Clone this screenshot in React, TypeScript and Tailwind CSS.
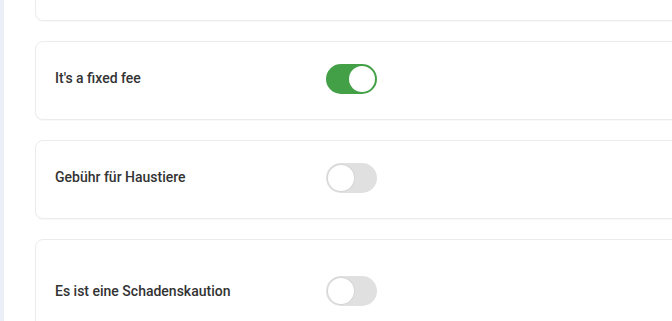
import { useState } from "react";

type Row = { id: string; label: string; on: boolean; tall?: boolean };

const ROWS: Row[] = [
  { id: "fixed", label: "It's a fixed fee", on: true },
  { id: "pets", label: "Gebühr für Haustiere", on: false },
  { id: "deposit", label: "Es ist eine Schadenskaution", on: false, tall: true },
];

function Toggle({ on, onChange }: { on: boolean; onChange: () => void }) {
  return (
    <button
      type="button"
      onClick={onChange}
      className={`relative w-[51px] h-[30px] rounded-full flex items-center px-[2px] ${
        on ? "bg-[#43a047] justify-end" : "bg-[#e0e0e0] justify-start"
      }`}
    >
      <span
        className={`block w-[26px] h-[26px] rounded-full bg-white ${
          on ? "" : "shadow-[0_0_0_1px_#d6d6d6]"
        }`}
      />
    </button>
  );
}

export default function App() {
  const [rows, setRows] = useState(ROWS);

  const flip = (id: string) =>
    setRows((r) => r.map((x) => (x.id === id ? { ...x, on: !x.on } : x)));

  return (
    <div
      className="h-[321px] w-[672px] overflow-hidden bg-white flex"
      style={{ fontFamily: "Roboto, 'Liberation Sans', sans-serif" }}
    >
      {/* Left rail */}
      <div className="w-[4px] shrink-0 bg-[#e9eef7]" />

      <div className="flex flex-col gap-[20px] pl-[31px] -mt-[59px]">
        {/* Previous card, mostly scrolled out */}
        <div className="w-[660px] h-[80px] shrink-0 rounded-[8px] border border-[#ececec] bg-white shadow-[0_1px_1px_rgba(0,0,0,0.03)]" />

        {rows.map((row) => (
          <div
            key={row.id}
            className={`w-[660px] shrink-0 rounded-[8px] border border-[#ececec] bg-white shadow-[0_1px_1px_rgba(0,0,0,0.03)] flex items-center px-[19px] pb-[4px] ${
              row.tall ? "h-[108px]" : "h-[79px]"
            }`}
          >
            <span className="w-[271px] shrink-0 text-[14px] text-[#333333] font-medium">
              {row.label}
            </span>
            <Toggle on={row.on} onChange={() => flip(row.id)} />
          </div>
        ))}
      </div>
    </div>
  );
}
